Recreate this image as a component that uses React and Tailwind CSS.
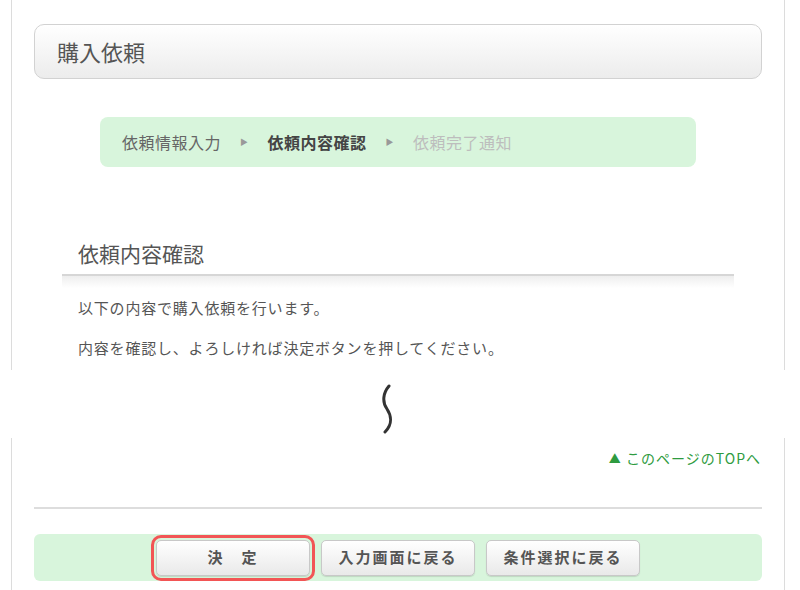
// Purchase request confirmation screen (購入依頼 / 依頼内容確認).
// Top and bottom of the page are shown as two cut panels with a squiggle between.

const FONT = { fontFamily: '"Noto Sans CJK JP", "Noto Sans", sans-serif' };

function Steps() {
  return (
    <div className="mx-auto mt-[38px] flex h-[50px] w-[596px] items-center rounded-[8px] bg-[#d8f5dc] pl-[22px] text-[16px] tracking-[0.5px]">
      <span className="text-[#666]">依頼情報入力</span>
      <span className="mx-[19px] text-[8px] text-[#999]">▶</span>
      <span className="font-bold text-[#444]">依頼内容確認</span>
      <span className="mx-[19px] text-[8px] text-[#999]">▶</span>
      <span className="text-[#bdbdbd]">依頼完了通知</span>
    </div>
  );
}

function Btn({ children, highlight }) {
  return (
    <button
      className={
        "h-[36px] w-[154px] rounded-[5px] border border-[#c8c8c8] bg-gradient-to-b from-white to-[#e9e9e9] text-[15px] font-bold tracking-[2px] text-[#555] shadow-[0_1px_1px_rgba(0,0,0,0.12)]" +
        (highlight ? " outline-[3px] outline-offset-[2px] outline-[#f25555] outline-solid" : "")
      }
    >
      {children}
    </button>
  );
}

export default function App() {
  return (
    <div className="h-[590px] w-[800px] overflow-hidden bg-white" style={FONT}>
      {/* top panel */}
      <div className="ml-[11px] h-[370px] w-[774px] border-x border-[#dcdcdc] px-[22px] pt-[24px]">
        <div className="flex h-[55px] items-center rounded-[10px] border border-[#d2d2d2] bg-gradient-to-b from-white to-[#ececec] pl-[22px] text-[22px] text-[#555]">
          購入依頼
        </div>

        <Steps />

        <div className="mx-[28px] mt-[71px]">
          <h2 className="border-b-2 border-[#d6d6d6] pb-[6px] pl-[16px] text-[21px] font-normal leading-[30px] text-[#555]">
            依頼内容確認
          </h2>
          <div className="h-[12px] bg-gradient-to-b from-[#eeeeee] to-white" />
          <div className="pl-[16px] text-[15px] leading-[40px] tracking-[0.8px] text-[#555]">
            <p>以下の内容で購入依頼を行います。</p>
            <p>内容を確認し、よろしければ決定ボタンを押してください。</p>
          </div>
        </div>
      </div>

      {/* page break */}
      <div className="h-[68px] pl-[378px] pt-[14px]">
        <svg width="20" height="52" viewBox="0 0 20 52">
          <path
            d="M11 2 C5 9, 4 18, 9 25 C13 31, 15 40, 7 48"
            fill="none"
            stroke="#333"
            strokeWidth="3"
            strokeLinecap="round"
          />
        </svg>
      </div>

      {/* bottom panel */}
      <div className="ml-[11px] h-[152px] w-[774px] border-x border-[#dcdcdc] px-[22px] pt-[10px]">
        <div className="pr-[1px] text-right text-[14px] leading-[20px] tracking-[1px] text-[#2e9b40]">
          <span className="text-[12px]">▲</span> このページのTOPへ
        </div>
        <div className="mt-[38px] border-t-2 border-[#dddddd]" />
        <div className="mt-[25px] flex h-[47px] items-center justify-center gap-[11px] rounded-[6px] bg-[#d8f5dc]">
          <Btn highlight>決　定</Btn>
          <Btn>入力画面に戻る</Btn>
          <Btn>条件選択に戻る</Btn>
        </div>
      </div>
    </div>
  );
}
